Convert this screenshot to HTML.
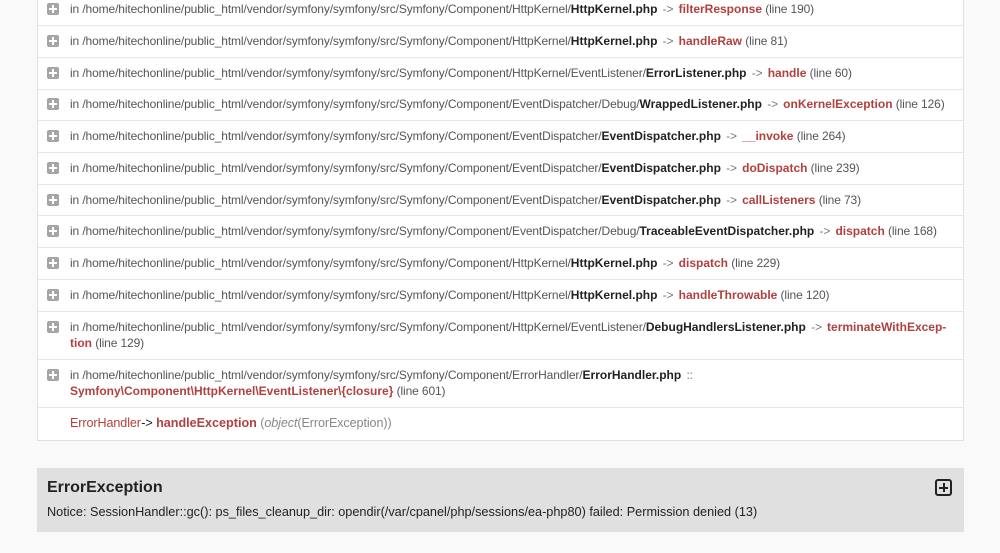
<!DOCTYPE html>
<html><head><meta charset="utf-8"><style>
body{margin:0;background:#f9f9f9;font-family:"Liberation Sans",Arial,sans-serif;width:1000px;height:553px;overflow:hidden;position:relative;color:#222}
.box{position:absolute;left:37px;top:-6px;width:927px;height:447px;background:#fff;border:1px solid #e0e0e0;box-sizing:border-box}
.sep{position:absolute;left:38px;width:925px;height:1px;background:#e6e6e6}
.t{position:absolute;left:70px;font-size:12px;line-height:16px;color:#555;white-space:nowrap;letter-spacing:-0.12px}
.t b{color:#222;letter-spacing:0}
.r{color:#b0413e;font-weight:bold;letter-spacing:0}
.a{color:#777;margin:0 2px}
.ic{position:absolute;left:47px;width:12px;height:12px;background:#a5a5a5;border-radius:2px}
.ic:before{content:"";position:absolute;left:5px;top:2px;width:2px;height:8px;background:#fff}
.ic:after{content:"";position:absolute;left:2px;top:5px;width:8px;height:2px;background:#fff}
.g{position:absolute;left:37px;top:468px;width:927px;height:64px;background:#e0e0e0}
</style></head><body>
<div class="box"></div>
<div class="sep" style="top:25px"></div><div class="sep" style="top:57px"></div><div class="sep" style="top:89px"></div><div class="sep" style="top:120px"></div><div class="sep" style="top:152px"></div><div class="sep" style="top:184px"></div><div class="sep" style="top:215px"></div><div class="sep" style="top:247px"></div><div class="sep" style="top:279px"></div><div class="sep" style="top:311px"></div><div class="sep" style="top:359px"></div><div class="sep" style="top:407px"></div>

<div class="ic" style="top:3px"></div><div class="t" style="top:1px">in /home/hitechonline/public_html/vendor/symfony/symfony/src/Symfony/Component/HttpKernel/<b>HttpKernel.php</b> <span class="a">-&gt;</span> <span class="r">filterResponse</span> (line 190)</div>
<div class="ic" style="top:35px"></div><div class="t" style="top:33px">in /home/hitechonline/public_html/vendor/symfony/symfony/src/Symfony/Component/HttpKernel/<b>HttpKernel.php</b> <span class="a">-&gt;</span> <span class="r">handleRaw</span> (line 81)</div>
<div class="ic" style="top:67px"></div><div class="t" style="top:65px">in /home/hitechonline/public_html/vendor/symfony/symfony/src/Symfony/Component/HttpKernel/EventListener/<b>ErrorListener.php</b> <span class="a">-&gt;</span> <span class="r">handle</span> (line 60)</div>
<div class="ic" style="top:98px"></div><div class="t" style="top:96px">in /home/hitechonline/public_html/vendor/symfony/symfony/src/Symfony/Component/EventDispatcher/Debug/<b>WrappedListener.php</b> <span class="a">-&gt;</span> <span class="r">onKernelException</span> (line 126)</div>
<div class="ic" style="top:130px"></div><div class="t" style="top:128px">in /home/hitechonline/public_html/vendor/symfony/symfony/src/Symfony/Component/EventDispatcher/<b>EventDispatcher.php</b> <span class="a">-&gt;</span> <span class="r">__invoke</span> (line 264)</div>
<div class="ic" style="top:162px"></div><div class="t" style="top:160px">in /home/hitechonline/public_html/vendor/symfony/symfony/src/Symfony/Component/EventDispatcher/<b>EventDispatcher.php</b> <span class="a">-&gt;</span> <span class="r">doDispatch</span> (line 239)</div>
<div class="ic" style="top:194px"></div><div class="t" style="top:192px">in /home/hitechonline/public_html/vendor/symfony/symfony/src/Symfony/Component/EventDispatcher/<b>EventDispatcher.php</b> <span class="a">-&gt;</span> <span class="r">callListeners</span> (line 73)</div>
<div class="ic" style="top:225px"></div><div class="t" style="top:223px">in /home/hitechonline/public_html/vendor/symfony/symfony/src/Symfony/Component/EventDispatcher/Debug/<b>TraceableEventDispatcher.php</b> <span class="a">-&gt;</span> <span class="r">dispatch</span> (line 168)</div>
<div class="ic" style="top:257px"></div><div class="t" style="top:255px">in /home/hitechonline/public_html/vendor/symfony/symfony/src/Symfony/Component/HttpKernel/<b>HttpKernel.php</b> <span class="a">-&gt;</span> <span class="r">dispatch</span> (line 229)</div>
<div class="ic" style="top:289px"></div><div class="t" style="top:287px">in /home/hitechonline/public_html/vendor/symfony/symfony/src/Symfony/Component/HttpKernel/<b>HttpKernel.php</b> <span class="a">-&gt;</span> <span class="r">handleThrowable</span> (line 120)</div>
<div class="ic" style="top:321px"></div><div class="t" style="top:319px">in /home/hitechonline/public_html/vendor/symfony/symfony/src/Symfony/Component/HttpKernel/EventListener/<b>DebugHandlersListener.php</b> <span class="a">-&gt;</span> <span class="r">terminateWithExcep-</span><br><span class="r">tion</span> (line 129)</div>
<div class="ic" style="top:369px"></div><div class="t" style="top:367px">in /home/hitechonline/public_html/vendor/symfony/symfony/src/Symfony/Component/ErrorHandler/<b>ErrorHandler.php</b> <span class="a">::</span><br><span class="r">Symfony\Component\HttpKernel\EventListener\{closure}</span> (line 601)</div>
<div class="t" style="top:415px;font-size:12.6px;color:#888;letter-spacing:-0.1px"><span style="color:#b0413e">ErrorHandler</span> <span style="color:#222;margin-left:-3px">-&gt;</span> <span class="r">handleException</span> (<i>object</i>(ErrorException))</div>

<div class="g"></div>
<div style="position:absolute;left:47px;top:479px;font-size:16px;font-weight:bold;color:#222">ErrorException</div>
<div style="position:absolute;left:935px;top:479px;width:17px;height:17px;border:2px solid #222;border-radius:3px;box-sizing:border-box"><div style="position:absolute;left:5.5px;top:2px;width:2px;height:9px;background:#222"></div><div style="position:absolute;left:2px;top:5.5px;width:9px;height:2px;background:#222"></div></div>
<div style="position:absolute;left:47px;top:505px;font-size:12.7px;color:#222">Notice: SessionHandler::gc(): ps_files_cleanup_dir: opendir(/var/cpanel/php/sessions/ea-php80) failed: Permission denied (13)</div>
</body></html>
